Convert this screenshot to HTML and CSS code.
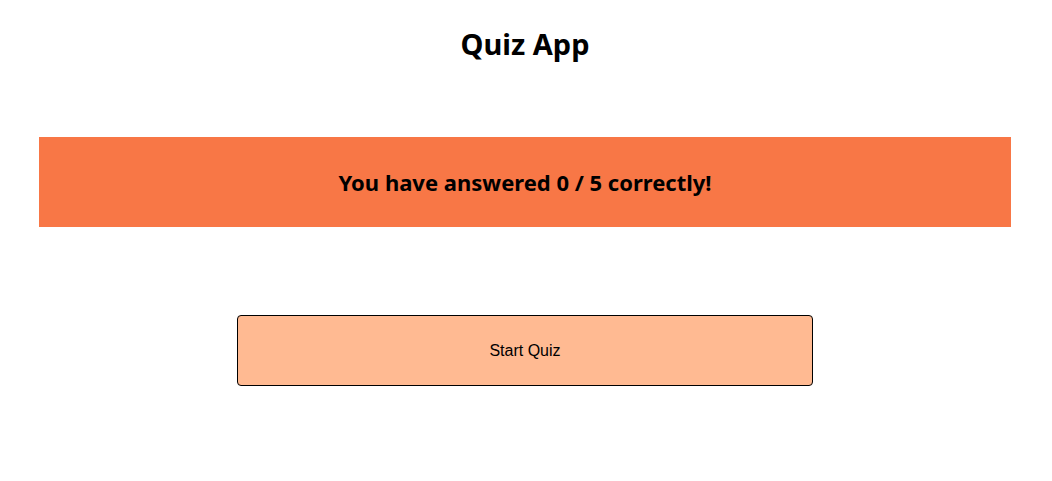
FILE: index.html
```html
<!DOCTYPE html>
<html>
<head>
<meta charset="utf-8">
<link rel="stylesheet" href="styles.css">
</head>
<body>
<div class="app">
  <h1 class="title">Quiz App</h1>
  <div class="result">
    <h2 class="result-text">You have answered 0 / 5 correctly!</h2>
  </div>
  <div class="actions">
    <button class="start-btn">Start Quiz</button>
  </div>
</div>
</body>
</html>
```
FILE: styles.css
```css
html, body {
  margin: 0;
  padding: 0;
  background: #ffffff;
}
.app {
  font-family: "Noto Sans", "Open Sans", sans-serif;
  color: #000;
  padding: 0 41px 0 39px;
}
.title {
  margin: 0;
  padding-top: 24px;
  height: 137px;
  box-sizing: border-box;
  text-align: center;
  font-size: 29px;
  font-weight: 700;
  line-height: 40px;
}
.result {
  background: #f87746;
  height: 90px;
  display: flex;
  align-items: center;
  justify-content: center;
}
.result-text {
  margin: 0;
  font-size: 22px;
  font-weight: 700;
}
.actions {
  display: flex;
  justify-content: center;
  padding-top: 88px;
}
.start-btn {
  width: 576px;
  height: 71px;
  background: #ffba92;
  border: 1px solid #000;
  border-radius: 4px;
  font-family: "Liberation Sans", Arial, sans-serif;
  font-size: 16px;
  color: #000;
}
```
